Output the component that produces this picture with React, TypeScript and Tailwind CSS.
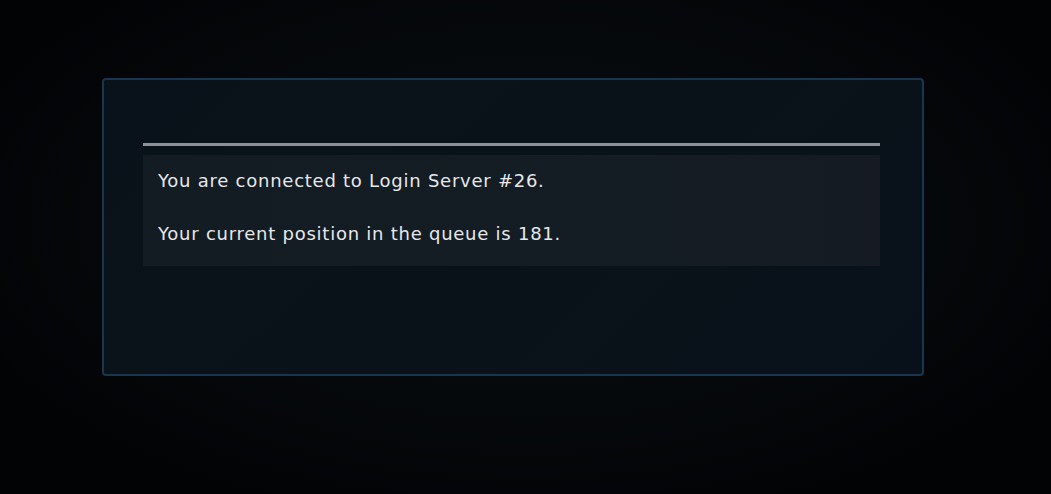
import { FC } from 'react';

const QueuePanel: FC = (): JSX.Element => {
  return (
    <div className="ml-[102px] mt-[78px] flex h-[298px] w-[822px] flex-col rounded-[4px] border-2 border-[#1a3550] bg-[linear-gradient(135deg,#09111a_0%,#0a1219_50%,#08111a_100%)] pl-[39px] pt-[63px]">
      {/* divider */}
      <div className="h-[3px] w-[737px] bg-[#8b9196]" />
      {/* message */}
      <div className="mt-[9px] flex h-[111px] w-[737px] flex-col gap-[27px] bg-[linear-gradient(90deg,#131b23_0%,#141c24_70%,#161b23_100%)] px-[15px] pt-[13px] text-[18px] leading-[26px] tracking-[0.75px] text-[#e6e8ea] [font-family:'DejaVu_Sans',sans-serif]">
        <p>You are connected to Login Server #26.</p>
        <p>Your current position in the queue is 181.</p>
      </div>
    </div>
  );
};

const App: FC = (): JSX.Element => {
  return (
    <div className="h-[494px] w-full overflow-hidden bg-[radial-gradient(ellipse_at_50%_45%,#0a0e12_0%,#06090c_45%,#020305_80%)] pt-px">
      <div className="-mt-px">
        <QueuePanel />
      </div>
    </div>
  );
};

export default App;
